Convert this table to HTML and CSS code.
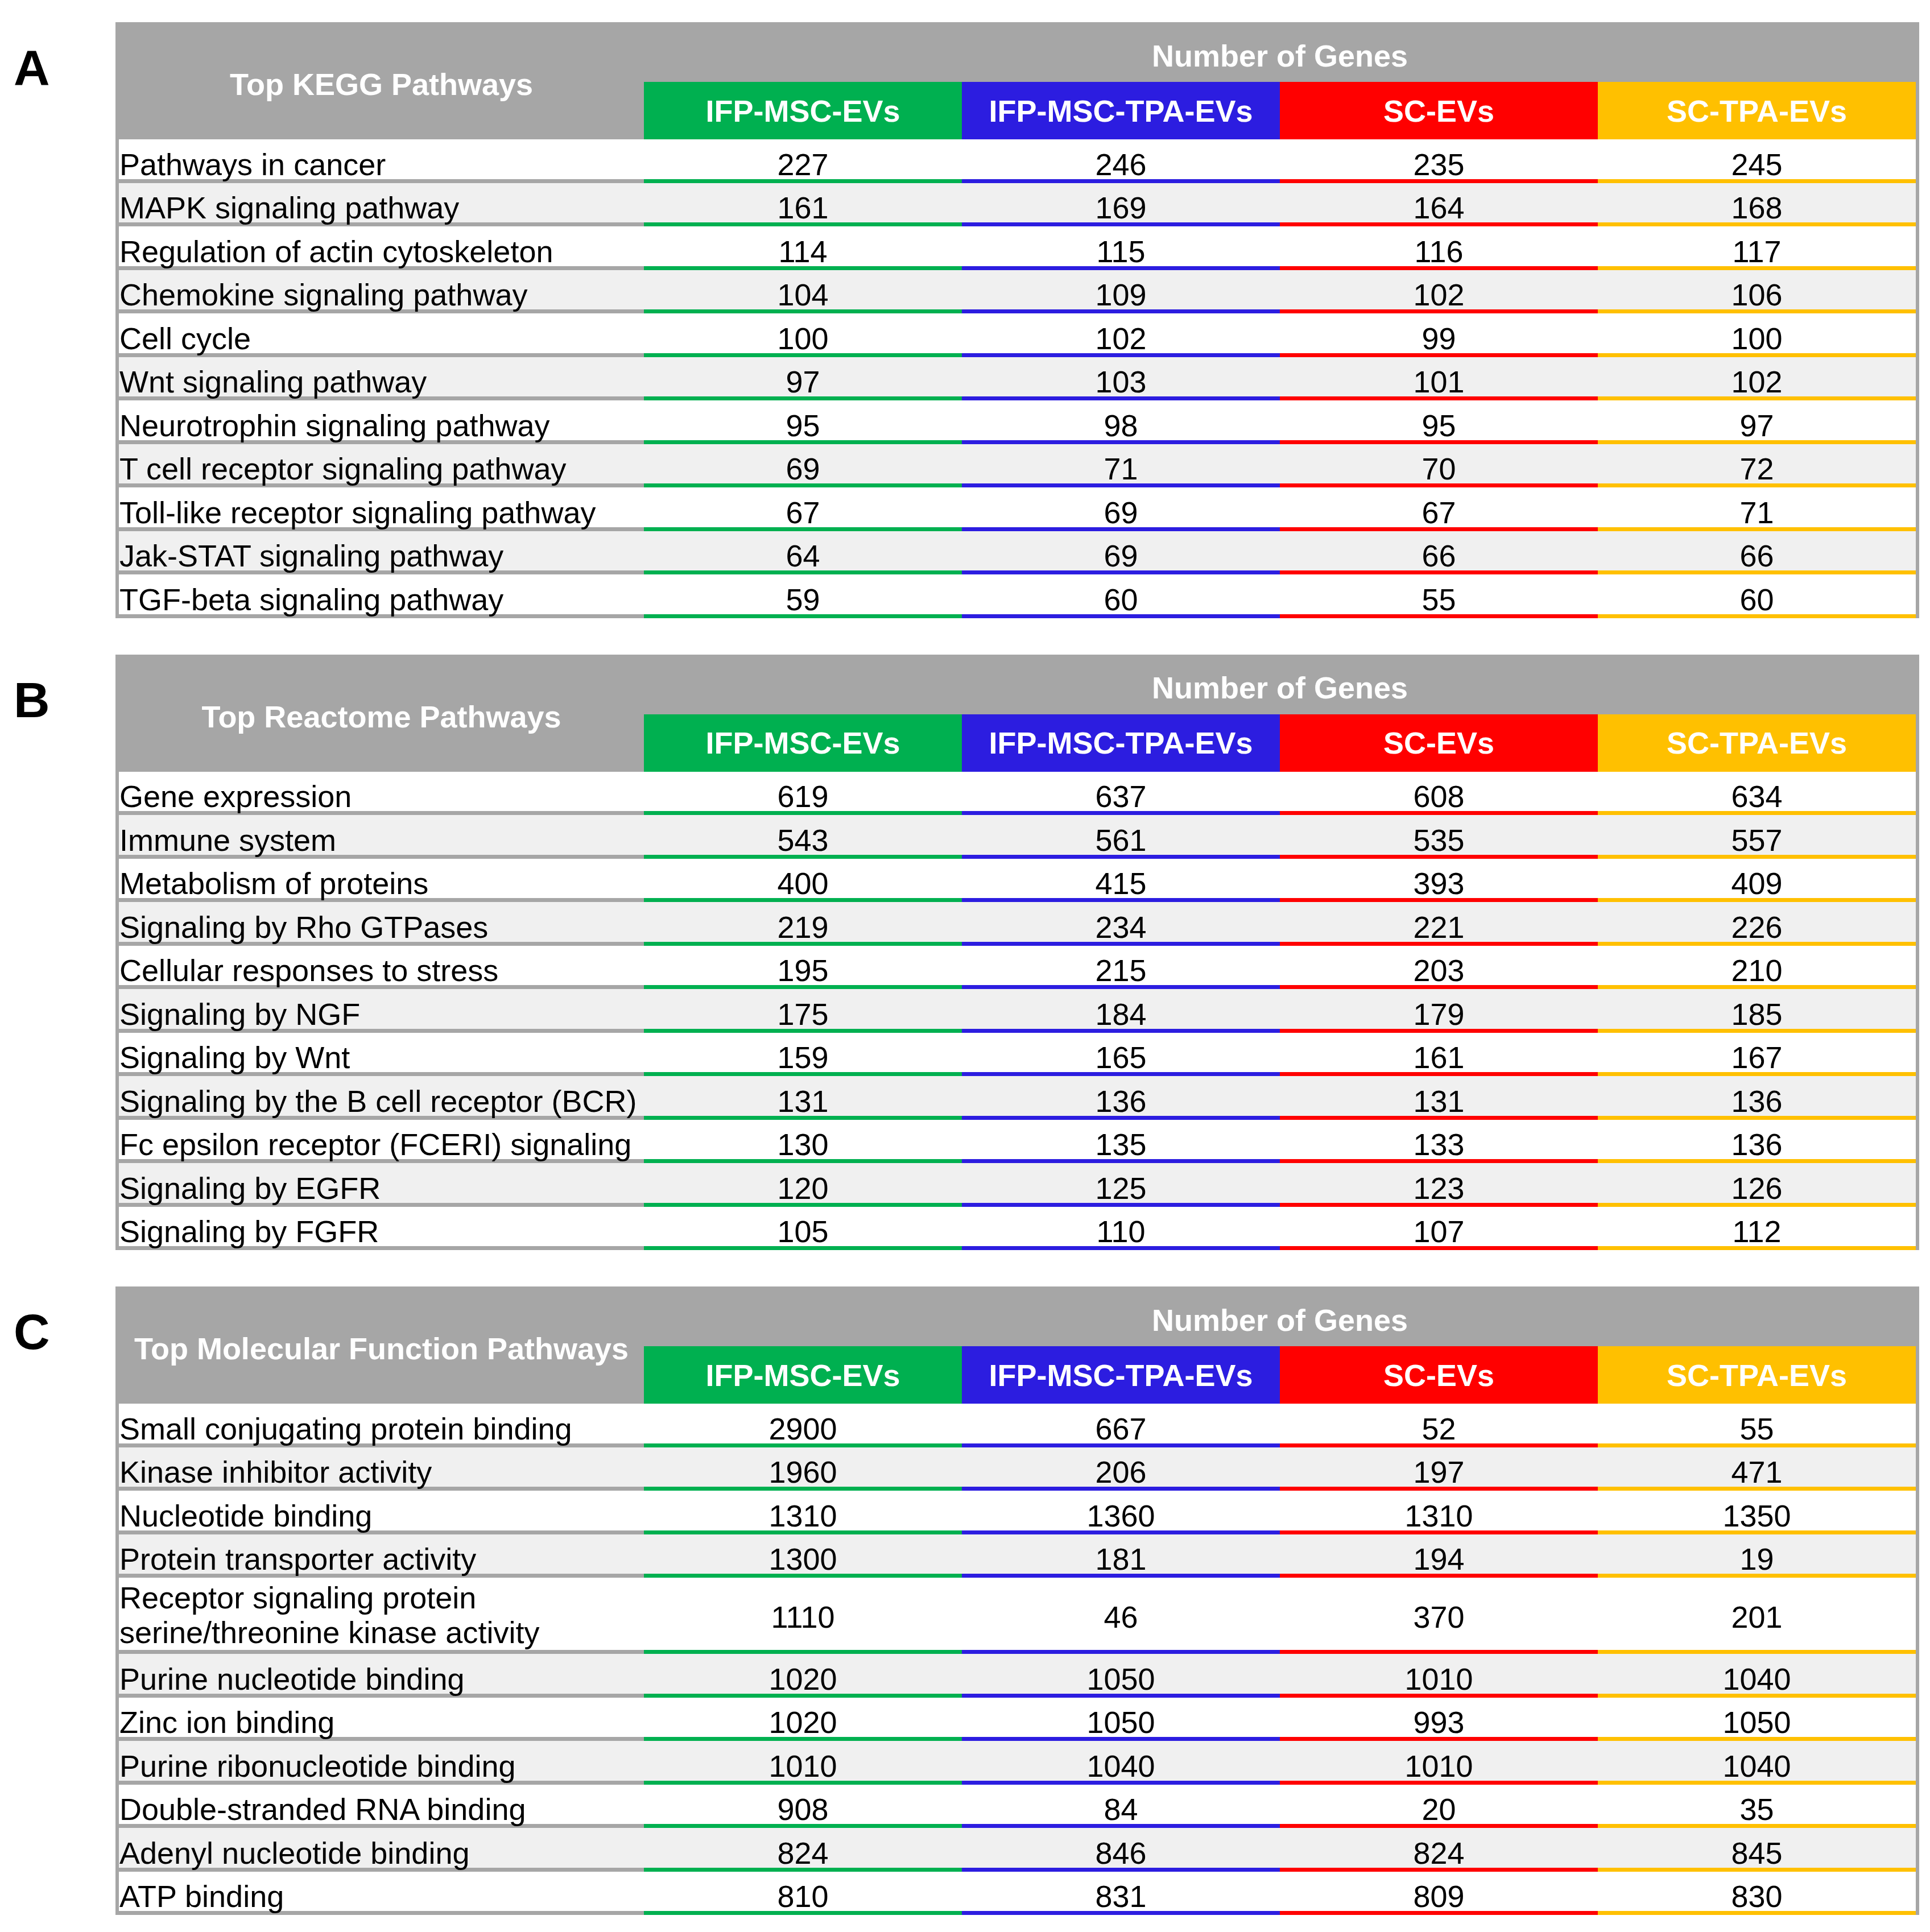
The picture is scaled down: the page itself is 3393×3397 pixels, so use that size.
FILE: index.html
```html
<!DOCTYPE html>
<html lang="en">
<head>
  <meta charset="UTF-8">
  <title>Top Pathways - Number of Genes</title>
  <link rel="stylesheet" href="styles.css">
</head>
<body>
  <div class="page">

    <!-- A: KEGG -->
    <div class="panel">
      <div class="letter">A</div>
      <div class="table">
        <div class="head">
          <div class="corner">Top KEGG Pathways</div>
          <div class="genes">Number of Genes</div>
          <div class="grp green">IFP-MSC-EVs</div>
          <div class="grp blue">IFP-MSC-TPA-EVs</div>
          <div class="grp red">SC-EVs</div>
          <div class="grp gold">SC-TPA-EVs</div>
        </div>
        <div class="rows">
          <div class="row"><div>Pathways in cancer</div><div>227</div><div>246</div><div>235</div><div>245</div></div>
          <div class="row"><div>MAPK signaling pathway</div><div>161</div><div>169</div><div>164</div><div>168</div></div>
          <div class="row"><div>Regulation of actin cytoskeleton</div><div>114</div><div>115</div><div>116</div><div>117</div></div>
          <div class="row"><div>Chemokine signaling pathway</div><div>104</div><div>109</div><div>102</div><div>106</div></div>
          <div class="row"><div>Cell cycle</div><div>100</div><div>102</div><div>99</div><div>100</div></div>
          <div class="row"><div>Wnt signaling pathway</div><div>97</div><div>103</div><div>101</div><div>102</div></div>
          <div class="row"><div>Neurotrophin signaling pathway</div><div>95</div><div>98</div><div>95</div><div>97</div></div>
          <div class="row"><div>T cell receptor signaling pathway</div><div>69</div><div>71</div><div>70</div><div>72</div></div>
          <div class="row"><div>Toll-like receptor signaling pathway</div><div>67</div><div>69</div><div>67</div><div>71</div></div>
          <div class="row"><div>Jak-STAT signaling pathway</div><div>64</div><div>69</div><div>66</div><div>66</div></div>
          <div class="row"><div>TGF-beta signaling pathway</div><div>59</div><div>60</div><div>55</div><div>60</div></div>
        </div>
      </div>
    </div>

    <!-- B: Reactome -->
    <div class="panel">
      <div class="letter">B</div>
      <div class="table">
        <div class="head">
          <div class="corner">Top Reactome Pathways</div>
          <div class="genes">Number of Genes</div>
          <div class="grp green">IFP-MSC-EVs</div>
          <div class="grp blue">IFP-MSC-TPA-EVs</div>
          <div class="grp red">SC-EVs</div>
          <div class="grp gold">SC-TPA-EVs</div>
        </div>
        <div class="rows">
          <div class="row"><div>Gene expression</div><div>619</div><div>637</div><div>608</div><div>634</div></div>
          <div class="row"><div>Immune system</div><div>543</div><div>561</div><div>535</div><div>557</div></div>
          <div class="row"><div>Metabolism of proteins</div><div>400</div><div>415</div><div>393</div><div>409</div></div>
          <div class="row"><div>Signaling by Rho GTPases</div><div>219</div><div>234</div><div>221</div><div>226</div></div>
          <div class="row"><div>Cellular responses to stress</div><div>195</div><div>215</div><div>203</div><div>210</div></div>
          <div class="row"><div>Signaling by NGF</div><div>175</div><div>184</div><div>179</div><div>185</div></div>
          <div class="row"><div>Signaling by Wnt</div><div>159</div><div>165</div><div>161</div><div>167</div></div>
          <div class="row"><div>Signaling by the B cell receptor (BCR)</div><div>131</div><div>136</div><div>131</div><div>136</div></div>
          <div class="row"><div>Fc epsilon receptor (FCERI) signaling</div><div>130</div><div>135</div><div>133</div><div>136</div></div>
          <div class="row"><div>Signaling by EGFR</div><div>120</div><div>125</div><div>123</div><div>126</div></div>
          <div class="row"><div>Signaling by FGFR</div><div>105</div><div>110</div><div>107</div><div>112</div></div>
        </div>
      </div>
    </div>

    <!-- C: Molecular function -->
    <div class="panel">
      <div class="letter">C</div>
      <div class="table">
        <div class="head">
          <div class="corner">Top Molecular Function Pathways</div>
          <div class="genes">Number of Genes</div>
          <div class="grp green">IFP-MSC-EVs</div>
          <div class="grp blue">IFP-MSC-TPA-EVs</div>
          <div class="grp red">SC-EVs</div>
          <div class="grp gold">SC-TPA-EVs</div>
        </div>
        <div class="rows">
          <div class="row"><div>Small conjugating protein binding</div><div>2900</div><div>667</div><div>52</div><div>55</div></div>
          <div class="row"><div>Kinase inhibitor activity</div><div>1960</div><div>206</div><div>197</div><div>471</div></div>
          <div class="row"><div>Nucleotide binding</div><div>1310</div><div>1360</div><div>1310</div><div>1350</div></div>
          <div class="row"><div>Protein transporter activity</div><div>1300</div><div>181</div><div>194</div><div>19</div></div>
          <div class="row tall"><div>Receptor signaling protein<br>serine/threonine kinase activity</div><div>1110</div><div>46</div><div>370</div><div>201</div></div>
          <div class="row"><div>Purine nucleotide binding</div><div>1020</div><div>1050</div><div>1010</div><div>1040</div></div>
          <div class="row"><div>Zinc ion binding</div><div>1020</div><div>1050</div><div>993</div><div>1050</div></div>
          <div class="row"><div>Purine ribonucleotide binding</div><div>1010</div><div>1040</div><div>1010</div><div>1040</div></div>
          <div class="row"><div>Double-stranded RNA binding</div><div>908</div><div>84</div><div>20</div><div>35</div></div>
          <div class="row"><div>Adenyl nucleotide binding</div><div>824</div><div>846</div><div>824</div><div>845</div></div>
          <div class="row"><div>ATP binding</div><div>810</div><div>831</div><div>809</div><div>830</div></div>
        </div>
      </div>
    </div>

  </div>
</body>
</html>
```

FILE: styles.css
```css
body{
  margin: 0;
  background-color: #ffffff;
  font-family: "Liberation Sans", Arial, Helvetica, sans-serif;
  color: #000000;
}
.page{
  display: flex;
  flex-direction: column;
  gap: 64px;
  padding-top: 39px;
}
.panel{
  display: flex;
}
.letter{
  box-sizing: border-box;
  width: 203px;
  padding-left: 24px;
  padding-top: 36px;
  font-size: 88px;
  font-weight: bold;
  line-height: 1;
}
.table{
  width: 3159px;
  padding: 0 6px;
  background-color: #a6a6a6;
}

/* header */
.head{
  display: grid;
  grid-template-columns: 923px repeat(4, 1fr);
  grid-template-rows: 105px 101px;
  color: #ffffff;
  font-weight: bold;
  font-size: 54px;
  line-height: 1;
}
.corner{
  grid-row: 1 / span 2;
  display: flex;
  align-items: center;
  justify-content: center;
  padding-top: 12px;
  white-space: nowrap;
}
.genes{
  grid-column: 2 / span 4;
  display: flex;
  align-items: center;
  justify-content: center;
  padding-top: 12px;
}
.grp{
  display: flex;
  align-items: center;
  justify-content: center;
}
.green{ background-color: #00b050; }
.blue{ background-color: #2c1de0; }
.red{ background-color: #ff0000; }
.gold{ background-color: #ffc000; }

/* body rows */
.row{
  display: grid;
  grid-template-columns: 923px repeat(4, 1fr);
  background-color: #ffffff;
  font-size: 54px;
  line-height: 51px;
}
.row:nth-child(even){
  background-color: #f0f0f0;
}
.row > div{
  box-sizing: border-box;
  min-height: 76.5px;
  display: flex;
  align-items: flex-end;
  justify-content: center;
  border-bottom: 7px solid #a6a6a6;
  white-space: nowrap;
}
.row > div:first-child{
  justify-content: flex-start;
  padding-left: 1px;
}
.row > div:nth-child(2){ border-bottom-color: #00b050; }
.row > div:nth-child(3){ border-bottom-color: #2c1de0; }
.row > div:nth-child(4){ border-bottom-color: #ff0000; }
.row > div:nth-child(5){ border-bottom-color: #ffc000; }

.tall > div{
  min-height: 134px;
  align-items: center;
  padding-top: 12px;
}
.tall > div:first-child{
  align-items: flex-end;
  padding-top: 0;
  line-height: 61px;
}
```
